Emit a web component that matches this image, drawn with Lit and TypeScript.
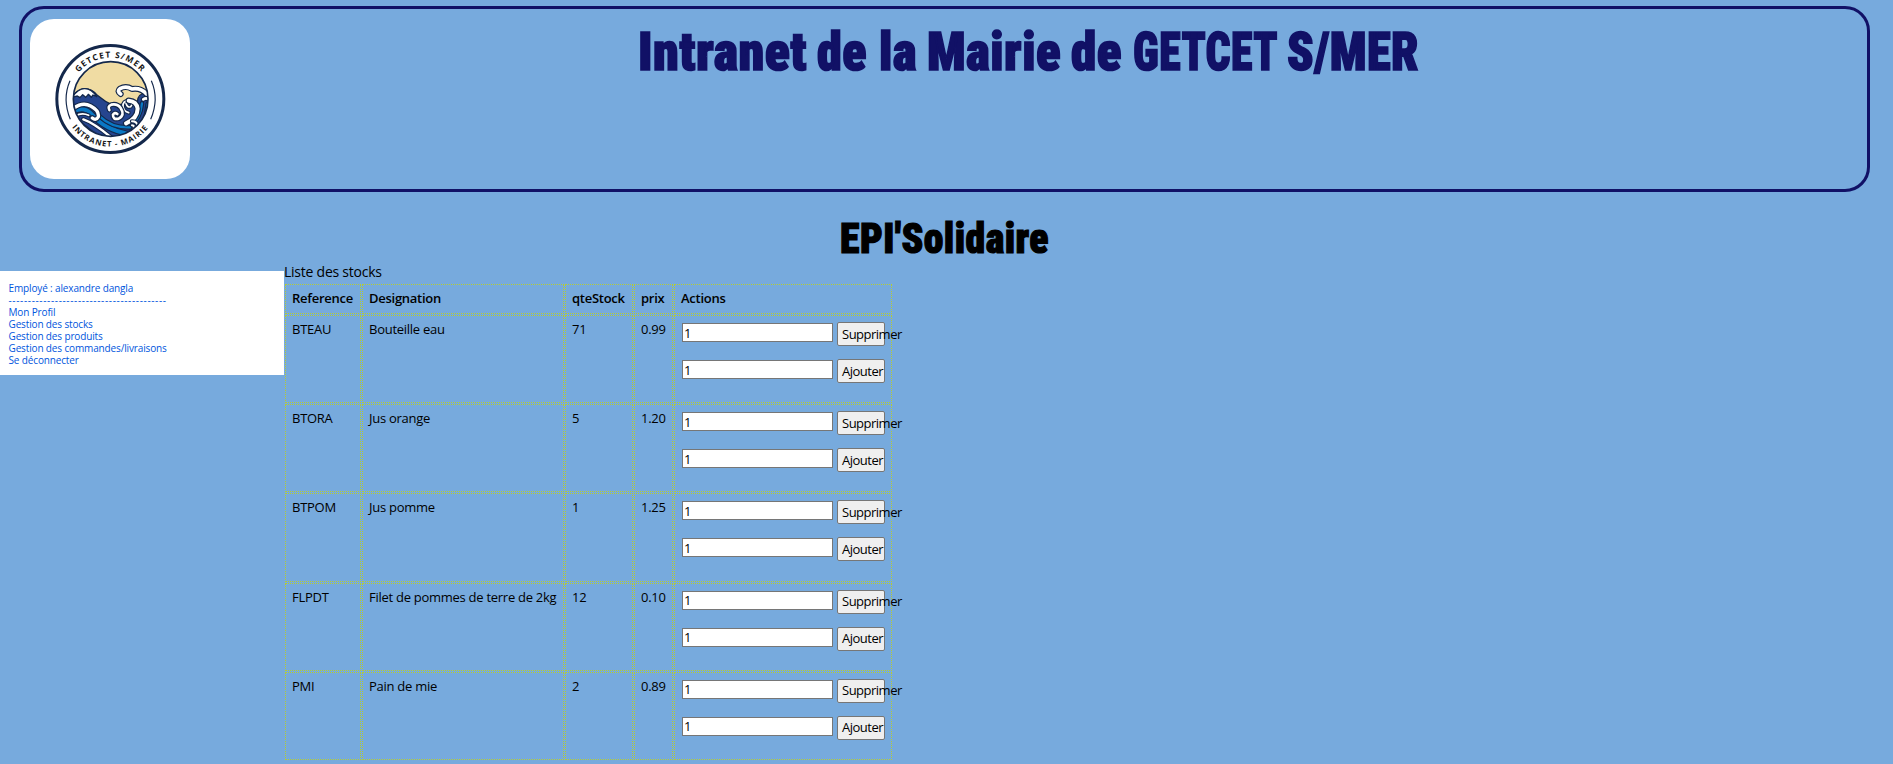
import { LitElement, html, css, svg } from "lit";
import { customElement } from "lit/decorators.js";

interface Stock {
  ref: string;
  label: string;
  qty: string;
  price: string;
}

const STOCKS: Stock[] = [
  { ref: "BTEAU", label: "Bouteille eau", qty: "71", price: "0.99" },
  { ref: "BTORA", label: "Jus orange", qty: "5", price: "1.20" },
  { ref: "BTPOM", label: "Jus pomme", qty: "1", price: "1.25" },
  { ref: "FLPDT", label: "Filet de pommes de terre de 2kg", qty: "12", price: "0.10" },
  { ref: "PMI", label: "Pain de mie", qty: "2", price: "0.89" },
];

const MENU = [
  "Mon Profil",
  "Gestion des stocks",
  "Gestion des produits",
  "Gestion des commandes/livraisons",
  "Se déconnecter",
];

// Each word of the banner title with its start and width.
const TITLE: [string, number, number][] = [
  ["Intranet", -1, 169],
  ["de", 178, 50],
  ["la", 240, 38],
  ["Mairie", 288, 134],
  ["de", 432, 51],
  ["GETCET", 494, 145],
  ["S/MER", 648, 132],
];

// A ribbon of water or foam with a navy outline.
const ribbon = (d: string, width: number, color = "#fff") => svg`
  <path d=${d} fill="none" stroke="#14284b" stroke-width=${width + 7} />
  <path d=${d} fill="none" stroke=${color} stroke-width=${width} />`;

@customElement("town-logo")
export class TownLogo extends LitElement {
  static styles = css`
    :host {
      display: flex;
      align-items: center;
      justify-content: center;
      width: 160px;
      height: 160px;
      background: #fff;
      border-radius: 24px;
    }
    svg {
      width: 120px;
      height: 120px;
      display: block;
    }
    text {
      font-family: "Open Sans", sans-serif;
      font-weight: 700;
      font-size: 25px;
      letter-spacing: 3.4px;
      fill: #161616;
    }
    .low {
      font-size: 23px;
      letter-spacing: 3px;
    }
  `;

  render() {
    return html`<svg viewBox="0 3 360 360">
      ${svg`
      <defs>
        <clipPath id="disc"><circle cx="182" cy="183" r="112" /></clipPath>
        <path id="top" d="M57 183A124 124 0 0 1 305 183" />
        <path id="bottom" d="M38 183A143 143 0 0 0 324 183" />
      </defs>
      <circle cx="181" cy="183" r="160.500" fill="#fff" stroke="#14284b" stroke-width="9" />
      <g clip-path="url(#disc)" stroke="#14284b" stroke-width="4" stroke-linecap="round" stroke-linejoin="round">
        <rect x="60" y="60" width="240" height="240" fill="#f0dca3" stroke="none" />
        <path d="M60 182Q80 155 100 152Q125 150 142 172Q165 192 190 202L262 192Q262 165 300 160V300H60Z" fill="#26458f" />
        <path d="M66 178Q84 153 103 152Q124 151 140 176L129 171L124 178L115 169L107 178L98 170L90 179L82 174Z" fill="#fff" />
        ${ribbon("M262 300Q292 262 297 200", 16, "#0a78c4")}
        ${ribbon("M240 268Q272 240 276 196", 7, "#0a78c4")}
        ${ribbon("M60 226Q100 198 128 232Q165 275 235 288", 12, "#0a78c4")}
        ${ribbon("M60 248Q110 262 140 306", 9, "#0a78c4")}
        ${ribbon("M100 244Q135 256 195 308", 7)}
        ${ribbon("M150 236Q185 270 240 268", 7, "#0a78c4")}
        ${ribbon("M66 214Q96 190 122 204Q148 218 145 236Q138 249 127 240", 10)}
        ${ribbon("M76 234Q96 222 116 232", 5)}
        ${ribbon("M212 168Q200 160 210 152Q228 142 246 153Q272 148 292 170", 11)}
        ${ribbon("M280 184Q288 178 296 184", 8)}
        ${ribbon("M228 196Q232 210 242 206Q252 194 236 188Q218 188 219 205Q221 220 236 224", 5)}
        ${ribbon("M236 188Q260 190 263 212Q262 242 228 256", 12)}
        ${ribbon("M178 216Q172 204 184 200Q202 196 212 210Q226 232 206 242Q188 246 189 230Q194 222 202 228", 8)}
        ${ribbon("M246 250Q262 250 262 264M246 262Q256 262 250 274", 6)}
      </g>
      <circle cx="182" cy="183" r="112" fill="none" stroke="#14284b" stroke-width="5" />
      <path d="M60 128Q36 183 61 244M304 128Q328 183 302 244" fill="none" stroke="#14284b" stroke-width="3.500" />
      <text text-anchor="middle"><textPath href="#top" startOffset="50%">GETCET S/MER</textPath></text>
      <text class="low" text-anchor="middle"><textPath href="#bottom" startOffset="50%">INTRANET - MAIRIE</textPath></text>
      `}
    </svg>`;
  }
}

@customElement("app-root")
export class AppRoot extends LitElement {
  static styles = css`
    :host {
      display: block;
      box-sizing: border-box;
      height: 764px;
      overflow: hidden;
      padding-top: 6px;
      background: #77aadd;
      color: #000;
      font-family: "Open Sans", sans-serif;
      font-size: 13px;
    }
    .banner {
      display: grid;
      grid-template-columns: 160px 1fr;
      box-sizing: border-box;
      width: 1851px;
      height: 186px;
      margin-left: 19px;
      padding: 10px 8px;
      border: 3px solid #111166;
      border-radius: 25px;
    }
    .wide {
      display: block;
      overflow: visible;
      font-family: Roboto, sans-serif;
      font-stretch: 75%;
      font-weight: 900;
      letter-spacing: 0.5px;
    }
    .title {
      width: 779px;
      height: 60px;
      margin-left: 449px;
      fill: #111166;
      stroke: #111166;
      stroke-width: 1.6px;
      font-size: 54px;
    }
    .subtitle {
      width: 208px;
      height: 40px;
      margin: 22px 0 0 840px;
      font-size: 43px;
      stroke: #000;
      stroke-width: 1.2px;
    }
    .page {
      display: grid;
      grid-template-columns: 284px 1fr;
      margin-top: 9px;
      align-items: start;
    }
    .menu {
      box-sizing: border-box;
      height: 104px;
      margin-top: 8px;
      padding: 10.5px 8.5px;
      background: #fff;
      color: #0055dd;
      font-size: 10px;
      font-weight: 500;
      line-height: 12px;
      letter-spacing: -0.14px;
    }
    .item { display: block; height: 12px; white-space: nowrap; }
    .dashes { letter-spacing: 0.64px; }
    .caption { height: 21px; line-height: 17px; font-size: 14px; letter-spacing: -0.24px; }
    .stocks {
      display: grid;
      grid-template-columns: 76px 202px 68px 39px 218px;
      grid-template-rows: 30px repeat(5, 88.2px);
      gap: 1px;
      margin-left: 1px;
      letter-spacing: -0.27px;
    }
    .cell {
      box-sizing: border-box;
      border: 1px dotted #b5cc33;
      padding: 5px 6px;
      line-height: 16px;
      white-space: nowrap;
    }
    .head { font-weight: 600; }
    .actions { padding: 6px 6px 0 7px; }
    .form { display: flex; gap: 4px; height: 37px; }
    .qty {
      box-sizing: border-box;
      width: 151px;
      height: 19px;
      margin: 1px 0 0;
      padding: 0 1px;
      border: 1px solid #767676;
      background: #fff;
      font: inherit;
    }
    .btn {
      box-sizing: border-box;
      width: 48px;
      height: 24px;
      padding: 0 0 1px 4px;
      border: 1px solid #767676;
      border-radius: 2px;
      background: #efefef;
      color: #000;
      font: inherit;
      letter-spacing: -0.5px;
      text-align: left;
      white-space: nowrap;
    }
  `;

  private form(label: string) {
    return html`<div class="form">
      <input class="qty" .value=${"1"} /><button class="btn">${label}</button>
    </div>`;
  }

  render() {
    return html`
      <header class="banner">
        <town-logo></town-logo>
        <svg class="wide title">
          ${TITLE.map(([word, x, w]) => svg`<text x=${x} y="51.200" textLength=${w} lengthAdjust="spacingAndGlyphs">${word}</text>`)}
        </svg>
      </header>
      <svg class="wide subtitle"><text x="0" y="39" textLength="209" lengthAdjust="spacingAndGlyphs">EPI'Solidaire</text></svg>
      <div class="page">
        <nav class="menu">
          <span class="item">Employé : alexandre dangla</span>
          <span class="item dashes">-----------------------------------------</span>
          ${MENU.map((m) => html`<a class="item">${m}</a>`)}
        </nav>
        <main>
          <div class="caption">Liste des stocks</div>
          <div class="stocks">
            ${["Reference", "Designation", "qteStock", "prix", "Actions"].map((h) => html`<div class="cell head">${h}</div>`)}
            ${STOCKS.map(
              (s) => html`
                <div class="cell">${s.ref}</div>
                <div class="cell">${s.label}</div>
                <div class="cell">${s.qty}</div>
                <div class="cell">${s.price}</div>
                <div class="cell actions">${this.form("Supprimer")}${this.form("Ajouter")}</div>
              `
            )}
          </div>
        </main>
      </div>
    `;
  }
}
